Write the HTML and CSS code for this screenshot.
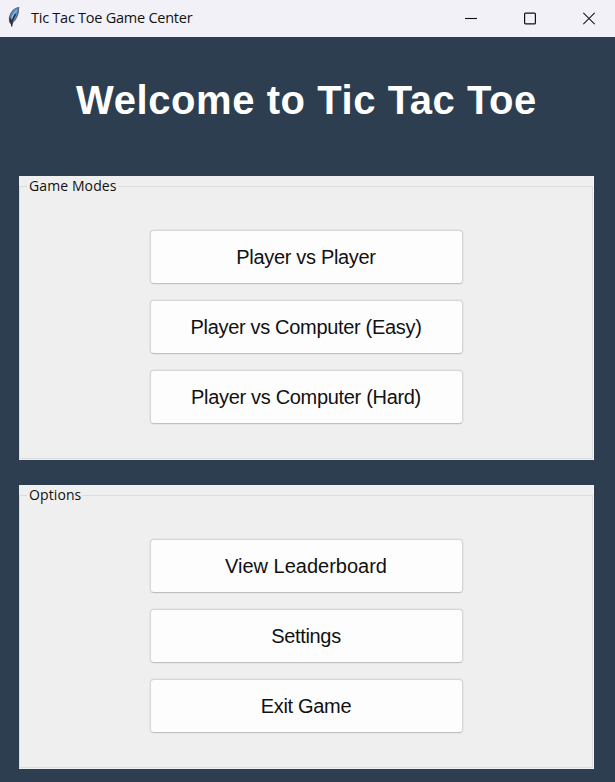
FILE: index.html
```html
<!DOCTYPE html>
<html lang="en">
<head>
<meta charset="utf-8">
<title>Tic Tac Toe Game Center</title>
<link rel="stylesheet" href="styles.css">
</head>
<body>
<header class="titlebar">
  <svg class="feather" width="14" height="22" viewBox="0 0 14 22">
    <path d="M11.600 1.500C7.500 2 4 6 2.500 11L2.500 15.500 4.700 18.500 6 16C9.500 13.500 12 7 11.600 1.500Z" fill="#4f86c6" stroke="#666a72" stroke-width="1.200"/>
    <path d="M10 4C7.500 6 5.500 9 4.500 12.500" fill="none" stroke="#86b6ec" stroke-width="1.600"/>
    <path d="M8.500 8L5 15 4.700 20.500M2.800 12L4.500 17.500" fill="none" stroke="#22262d" stroke-width="1.300"/>
  </svg>
  <span class="caption">Tic Tac Toe Game Center</span>
  <div class="controls">
    <svg width="12" height="14" viewBox="0 0 12 14"><path d="M0 6.500H12" stroke="#111" stroke-width="1.100"/></svg>
    <svg width="12" height="14" viewBox="0 0 12 14"><rect x=".6" y="1.100" width="10.800" height="10.800" rx="1" fill="none" stroke="#111" stroke-width="1.200"/></svg>
    <svg width="12" height="14" viewBox="0 0 12 14"><path d="M.3 .8L11.700 12.200M11.700 .8L.3 12.200" stroke="#111" stroke-width="1.100"/></svg>
  </div>
</header>
<main>
  <h1>Welcome to Tic Tac Toe</h1>
  <section class="group">
    <h2 class="label">Game Modes</h2>
    <div class="frame">
      <button class="narrow">Player vs Player</button>
      <button class="narrow">Player vs Computer (Easy)</button>
      <button class="narrow">Player vs Computer (Hard)</button>
    </div>
  </section>
  <section class="group">
    <h2 class="label">Options</h2>
    <div class="frame">
      <button>View Leaderboard</button>
      <button class="narrow">Settings</button>
      <button class="narrow">Exit Game</button>
    </div>
  </section>
</main>
</body>
</html>
```
FILE: styles.css
```css
* { box-sizing: border-box; }
body {
  margin: 0;
  height: 782px;
  overflow: hidden;
  background: #2c3e50;
  font-family: "Liberation Sans", Arial, sans-serif;
}
.titlebar {
  display: flex;
  align-items: center;
  height: 37px;
  padding: 0 20px 0 7px;
  background: #f3f1f8;
}
.feather { margin-bottom: 4px; }
.caption {
  margin: 0 auto 1px 10px;
  font: 14.500px/20px "Open Sans", "Noto Sans", sans-serif;
  letter-spacing: -0.25px;
  color: #111;
}
.controls { display: flex; gap: 47px; }
.controls svg { display: block; }
main { padding: 0 21px 0 19px; }
h1 {
  margin: 0;
  height: 139px;
  padding-top: 40px;
  font-size: 40px;
  line-height: 46px;
  letter-spacing: 0.57px;
  text-align: center;
  white-space: nowrap;
  color: #fff;
}
.group {
  display: grid;
  height: 284px;
  margin-bottom: 25px;
  padding-top: 10px;
  background: #efefef;
  border-right: 1px solid #f6f6f6;
}
.label {
  grid-area: 1 / 1;
  justify-self: start;
  align-self: start;
  z-index: 1;
  margin: -9px 0 0 8px;
  padding: 0 1px 0 2px;
  background: #efefef;
  font: 14px/18px "Open Sans", "Noto Sans", sans-serif;
  letter-spacing: 0.1px;
  color: #111;
}
.frame {
  grid-area: 1 / 1;
  display: flex;
  flex-direction: column;
  align-items: center;
  gap: 16px;
  margin-bottom: 1px;
  padding-top: 43px;
  border: 1px solid #dcdcdc;
}
button {
  width: 313px;
  height: 54px;
  margin: 0;
  padding: 0;
  border: 1px solid #d6d6d6;
  border-bottom-color: #c0c0c0;
  border-radius: 4px;
  box-shadow: 0 0 0 1px #e6e6e6;
  background: #fdfdfd;
  font: 20px/24px "Liberation Sans", Arial, sans-serif;
  color: #111;
}
.narrow { letter-spacing: -0.32px; }
```
